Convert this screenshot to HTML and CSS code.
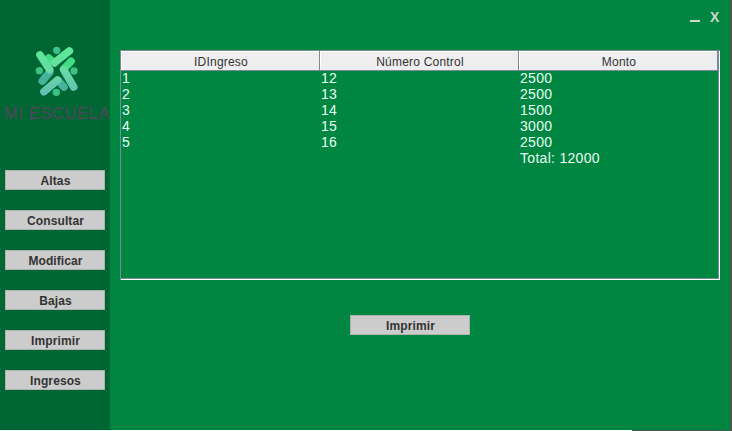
FILE: index.html
```html
<!DOCTYPE html>
<html lang="es">
<head>
<meta charset="utf-8">
<title>Mi Escuela</title>
<link rel="stylesheet" href="styles.css">
</head>
<body>
<div class="window">
  <aside class="sidebar">
    <svg class="logo" viewBox="0 0 330 285" role="img" aria-label="Mi Escuela">
      <defs>
        <linearGradient id="mint" gradientUnits="userSpaceOnUse" x1="0" y1="38" x2="0" y2="180">
          <stop offset="0" stop-color="#5bea93"/>
          <stop offset=".5" stop-color="#6bd9a6"/>
          <stop offset="1" stop-color="#60bdb2"/>
        </linearGradient>
      </defs>
      <g class="people">
        <path class="deep-top" d="M146 69L163 84"/>
        <path d="M165 82L208 48"/>
        <path class="deep-top" d="M213 79L192 101"/>
        <path d="M191 104L221 156"/>
        <path class="deep-low" d="M127 138L149 112"/>
        <path d="M120 60L149 104"/>
        <path class="deep-low" d="M192 156L176 138"/>
        <path d="M173 135L132 170"/>
      </g>
      <g class="heads">
        <circle cx="170" cy="46" r="11"/>
        <circle cx="118" cy="107" r="11"/>
        <circle cx="222" cy="108" r="11"/>
        <circle cx="169" cy="172" r="11"/>
      </g>
      <text class="brand" x="12" y="252" textLength="316">MI ESCUELA</text>
    </svg>
    <nav class="menu">
      <button>Altas</button>
      <button>Consultar</button>
      <button>Modificar</button>
      <button>Bajas</button>
      <button>Imprimir</button>
      <button>Ingresos</button>
    </nav>
  </aside>
  <main class="content">
    <div class="controls">
      <span class="minimize"></span>
      <span class="close">X</span>
    </div>
    <div class="table-pane">
      <table>
        <thead><tr><th>IDIngreso</th><th>Número Control</th><th>Monto</th></tr></thead>
        <tbody>
          <tr><td>1</td><td>12</td><td>2500</td></tr>
          <tr><td>2</td><td>13</td><td>2500</td></tr>
          <tr><td>3</td><td>14</td><td>1500</td></tr>
          <tr><td>4</td><td>15</td><td>3000</td></tr>
          <tr><td>5</td><td>16</td><td>2500</td></tr>
          <tr><td></td><td></td><td>Total: 12000</td></tr>
        </tbody>
      </table>
    </div>
    <button class="print">Imprimir</button>
  </main>
</div>
<div class="bottom-edge"></div>
</body>
</html>
```
FILE: styles.css
```css
* { box-sizing: border-box; }
body {
  margin: 0;
  width: 732px;
  height: 431px;
  overflow: hidden;
  font-family: "Liberation Sans", Arial, sans-serif;
}
.window {
  display: flex;
  height: 430px;
  background: #008641;
  border-right: 2px solid #49564d;
}
.sidebar {
  width: 110px;
  flex: none;
  background: #006633;
  padding-top: 35px;
}
.logo { display: block; width: 110px; height: 95px; }
.people { fill: none; stroke: url(#mint); stroke-width: 23; stroke-linecap: round; stroke-linejoin: round; }
.people .deep-top { stroke: #43dc82; }
.people .deep-low { stroke: #45b39c; }
.heads { fill: #3cc085; }
.brand { font-size: 48px; fill: #454d55; stroke: #454d55; stroke-width: 1; }
.menu {
  display: flex;
  flex-direction: column;
  gap: 20px;
  padding: 40px 5px 0;
}
button {
  height: 20px;
  padding: 2px 0 0 1px;
  border: 1px solid #a9b5ad;
  border-radius: 0;
  background: #cccccc;
  color: #333333;
  font: bold 12px/16px "Liberation Sans", Arial, sans-serif;
  letter-spacing: .1px;
}
.content {
  flex: 1;
  display: flex;
  flex-direction: column;
  padding: 0 10px;
}
.controls {
  height: 50px;
  display: flex;
  justify-content: flex-end;
  gap: 10px;
  padding: 10px 1px 0 0;
}
.minimize { width: 10px; height: 2px; margin-top: 10px; background: #ccd8c8; }
.close { width: 9px; color: #ccd8c8; font: bold 14px/15px "Liberation Sans", Arial, sans-serif; }
.table-pane {
  width: 600px;
  height: 230px;
  border: 1px solid #7a8a99;
  border-right: 0;
  border-bottom: 0;
  box-shadow: inset -1px -1px #ffffff, inset -2px -2px #7a8a99;
}
table {
  width: 597px;
  border-collapse: separate;
  border-spacing: 0;
  table-layout: fixed;
}
th {
  height: 20px;
  padding: 3px 0 0 2px;
  background: #eeeeee;
  color: #333333;
  border-right: 1px solid #7a8a99;
  border-bottom: 1px solid #7a8a99;
  box-shadow: inset 1px 1px #ffffff;
  font-size: 12px;
  font-weight: normal;
  line-height: 16px;
  letter-spacing: .2px;
}
td {
  height: 16px;
  padding: 0 0 2px 1px;
  color: #e6fff0;
  font-size: 14px;
  line-height: 14px;
  letter-spacing: .3px;
}
.print { width: 120px; margin: 35px 0 0 230px; }
.bottom-edge { height: 1px; background: linear-gradient(to right, #ffffff 632px, #49564d 632px); }
```
